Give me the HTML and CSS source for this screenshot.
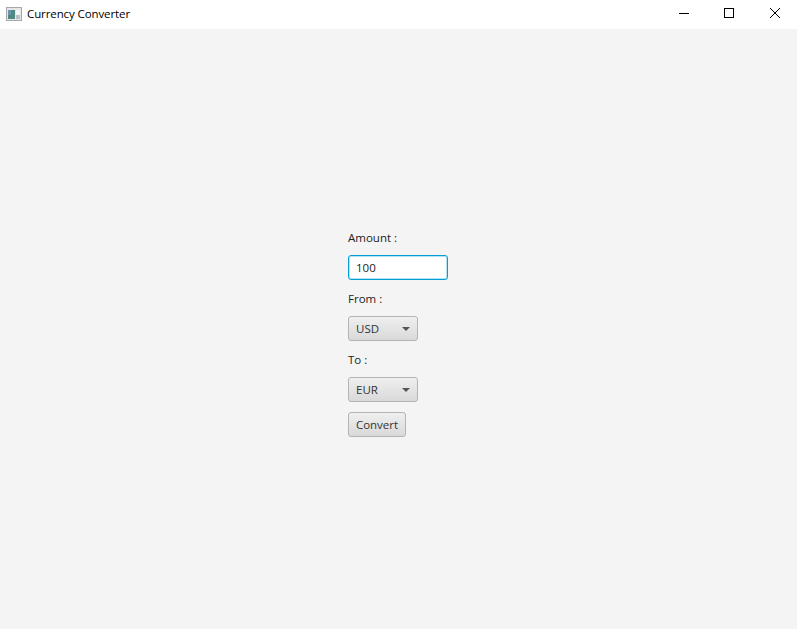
FILE: index.html
```html
<!DOCTYPE html>
<html lang="en">

<head>
    <meta charset="UTF-8">
    <meta name="viewport" content="width=device-width, initial-scale=1.0">
    <title>Currency Converter</title>
    <link rel="stylesheet" href="styles.css">
</head>

<body>
    <div class="titlebar">
        <svg class="app-icon" width="16" height="16" viewBox="0 0 16 16">
            <rect x="0.5" y="1.5" width="15" height="13" fill="#e4e6e8" stroke="#a4a8ac"/>
            <rect x="2" y="4" width="7" height="9" fill="#4f8a80"/>
            <rect x="2" y="4" width="3" height="5" fill="#6d93ad"/>
            <rect x="10" y="4" width="4" height="5" fill="#f6f7f8"/>
            <rect x="10" y="9" width="4" height="4" fill="#b9c0c6"/>
        </svg>
        <span class="title">Currency Converter</span>
        <div class="window-buttons">
            <div class="win-btn">
                <svg width="12" height="12" viewBox="0 0 12 12"><path d="M2 5.5H12" stroke="#000" fill="none"/></svg>
            </div>
            <div class="win-btn">
                <svg width="12" height="12" viewBox="0 0 12 12"><rect x="1.5" y="0.5" width="9" height="9" stroke="#000" fill="none"/></svg>
            </div>
            <div class="win-btn">
                <svg width="12" height="12" viewBox="0 0 12 12"><path d="M1 0L11 10M11 0L1 10" stroke="#000" fill="none"/></svg>
            </div>
        </div>
    </div>

    <div class="content">
        <form class="converter">
            <label class="field-label" for="amount">Amount :</label>
            <input class="amount" type="text" id="amount" value="100">
            <div class="field-label">From :</div>
            <div class="combo"><span>USD</span><i class="arrow"></i></div>
            <div class="field-label">To :</div>
            <div class="combo"><span>EUR</span><i class="arrow"></i></div>
            <button class="convert" type="button">Convert</button>
        </form>
    </div>
</body>

</html>
```

FILE: styles.css
```css
html, body {
    height: 100%;
}

body {
    margin: 0;
    display: flex;
    flex-direction: column;
    overflow: hidden;
    background-color: #f4f4f4;
    font-family: "Open Sans", "Noto Sans", sans-serif;
    font-size: 11.5px;
    color: #222222;
}

.titlebar {
    display: flex;
    align-items: center;
    height: 29px;
    flex: none;
    padding-left: 6px;
    background-color: #ffffff;
}

.app-icon {
    margin-right: 5px;
    margin-bottom: 1px;
}

.title {
    margin-bottom: 2px;
    letter-spacing: -0.1px;
    color: #000000;
}

.window-buttons {
    display: flex;
    align-self: flex-start;
    margin-left: auto;
    margin-right: -1px;
}

.win-btn {
    display: flex;
    justify-content: center;
    width: 46px;
    height: 29px;
    padding-top: 8px;
    box-sizing: border-box;
}

.content {
    flex: 1;
    display: flex;
    align-items: center;
    justify-content: center;
    padding-top: 8px;
    padding-right: 1px;
}

.converter {
    display: flex;
    flex-direction: column;
    align-items: flex-start;
    gap: 10px;
    width: 100px;
}

.field-label {
    display: block;
    height: 16px;
    line-height: 18px;
}

.amount {
    width: 100%;
    height: 25px;
    padding: 0 7px;
    box-sizing: border-box;
    border: 1px solid #039ed3;
    border-radius: 3px;
    outline: none;
    box-shadow: 0 0 0 1px #b5e3f3 inset;
    background-color: #ffffff;
    font-family: inherit;
    font-size: 11.5px;
    color: #222222;
}

.combo, .convert {
    height: 25px;
    box-sizing: border-box;
    border: 1px solid #b4b4b4;
    border-radius: 3px;
    background: linear-gradient(#efefef, #d9d9d9);
    font-family: inherit;
    font-size: 11.5px;
    color: #333333;
}

.combo {
    display: flex;
    align-items: center;
    justify-content: space-between;
    width: 70px;
    padding: 0 7px;
}

.arrow {
    width: 0;
    height: 0;
    border-left: 4px solid transparent;
    border-right: 4px solid transparent;
    border-top: 4px solid #555555;
}

.convert {
    width: 58px;
    padding: 0;
}
```
